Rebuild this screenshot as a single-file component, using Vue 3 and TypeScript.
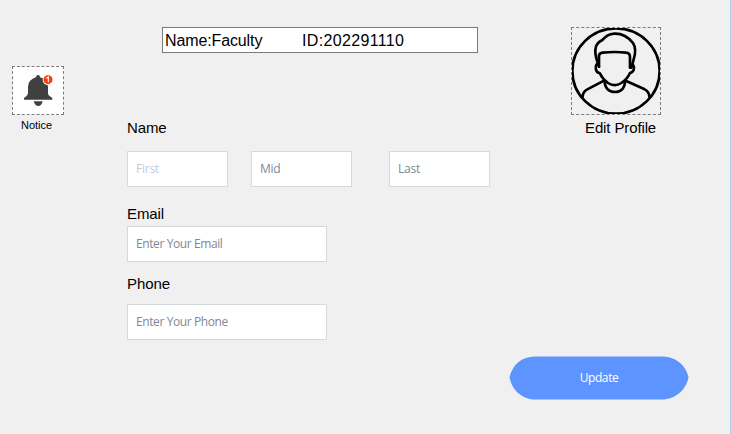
<script setup lang="ts">
import { reactive } from 'vue'

const user = { name: 'Faculty', id: '202291110' }
const form = reactive({ first: '', mid: '', last: '', email: '', phone: '' })
</script>

<template>
  <main class="window">
    <aside class="side">
      <button class="notice" type="button" aria-label="Notice">
        <svg width="50" height="47" viewBox="39 36 150 141">
          <path fill="#404040" d="M108 67Q108 60 114 60T120 67Q143 73 144 95V116Q145 121 157 129V134H72V129Q84 121 84 113V95Q85 74 108 67ZM101 139H128Q125 153 115 153T101 139Z" />
          <circle cx="144" cy="74" r="16" fill="#fff" />
          <circle cx="144" cy="74" r="13.5" fill="#fb3b04" />
          <path fill="none" stroke="#fff" stroke-width="3.5" d="M139 70L145 66V82" />
        </svg>
      </button>
      <span class="notice-text">Notice</span>
    </aside>

    <section class="details">
      <div class="identity">
        <span class="who">Name:{{ user.name }}</span>
        <span class="uid">ID:{{ user.id }}</span>
      </div>
      <label class="label name-label" for="first">Name</label>
      <div class="names">
        <input id="first" v-model="form.first" class="field short pale" placeholder="First" />
        <input v-model="form.mid" class="field short" placeholder="Mid" />
        <input v-model="form.last" class="field short last" placeholder="Last" />
      </div>
      <label class="label email-label" for="email">Email</label>
      <input id="email" v-model="form.email" class="field" placeholder="Enter Your Email" />
      <label class="label phone-label" for="phone">Phone</label>
      <input id="phone" v-model="form.phone" class="field phone" placeholder="Enter Your Phone" />
    </section>

    <section class="actions">
      <div class="avatar">
        <svg width="88" height="86" viewBox="36 39 264 258">
          <g fill="none" stroke="#000" stroke-width="8" stroke-linejoin="round" stroke-linecap="round">
            <ellipse cx="168" cy="168" rx="131" ry="128" />
            <path d="M117 155C112 140 105 124 106 105C106 90 113 82 127 75C137 65 145 57 163 56C190 55 207 69 219 84C229 99 226 119 220 137L214 158" />
            <path d="M117 155V122Q118 114 128 113Q164 109 198 113Q210 114 210 126V158" />
            <path d="M110 148C104 156 107 173 119 174C125 187 134 197 144 204Q164 217 184 204C196 196 205 186 210 174C222 172 225 158 219 149" />
            <path d="M134 198C134 218 146 231 165 231S195 218 195 198M132 197L82 223Q69 230 68 244M197 197L254 223Q267 230 268 244" />
          </g>
        </svg>
      </div>
      <span class="edit">Edit Profile</span>
      <button class="update" type="button">
        <svg class="pill" width="180" height="44" viewBox="0 0 180 44">
          <path fill="#5e94ff" d="M.5 21.5C3 9 13 .5 26 .5H153C166 .5 177 9 179.5 21.5C177 34 166 43.5 153 43.5H26C13 43.5 3 34 .5 21.5Z" />
        </svg>
        <span class="update-text">Update</span>
      </button>
    </section>
  </main>
</template>

<style>
body {
  margin: 0;
}
</style>

<style scoped>
.window {
  box-sizing: border-box;
  display: flex;
  width: 731px;
  height: 434px;
  padding-left: 12px;
  overflow: hidden;
  background: #f0f0f0;
  border-right: 1px solid #b1cdec;
  color: #000;
  font-family: "Liberation Sans", Arial, sans-serif;
}
svg {
  display: block;
}
.side {
  width: 115px;
  padding-top: 66px;
}
.notice {
  box-sizing: border-box;
  display: block;
  width: 52px;
  height: 49px;
  padding: 0;
  background: #fff;
  border: 1px dashed #7b7b7b;
}
.notice-text {
  display: block;
  margin: 4px 0 0 9px;
  font-size: 11px;
  line-height: 13px;
}
.details {
  display: flex;
  flex-direction: column;
  align-items: flex-start;
  width: 382px;
  padding-top: 27px;
}
.identity {
  box-sizing: border-box;
  display: flex;
  width: 316px;
  height: 26px;
  margin-left: 35px;
  padding-left: 2px;
  background: #fff;
  border: 1px solid #7a7a7a;
  font-size: 16px;
  line-height: 25px;
}
.who {
  width: 137px;
  letter-spacing: -0.12px;
}
.uid {
  letter-spacing: 0.35px;
}
.label {
  font-size: 15px;
  line-height: 18px;
  letter-spacing: -0.1px;
}
.name-label {
  margin: 66px 0 14px;
}
.names {
  display: flex;
  gap: 23px;
}
.field {
  box-sizing: border-box;
  width: 200px;
  height: 36px;
  padding: 0 8px 2px;
  background: #fff;
  border: 1px solid #d5dadf;
  border-radius: 0;
  outline: none;
  font-family: "Open Sans", "Noto Sans", sans-serif;
  font-size: 12px;
  letter-spacing: -0.4px;
}
.field::placeholder {
  color: #7d8994;
  opacity: 1;
}
.short {
  width: 101px;
  letter-spacing: -0.25px;
}
.pale::placeholder {
  color: #c1ccdb;
}
.last {
  margin-left: 14px;
}
.email-label {
  margin: 18px 0 3px;
}
.phone-label {
  margin-top: 13px;
}
.phone {
  margin-top: 11px;
}
.actions {
  width: 180px;
  padding-top: 27px;
}
.avatar {
  box-sizing: border-box;
  width: 90px;
  height: 88px;
  margin-left: 62px;
  border: 1px dashed #7b7b7b;
}
.edit {
  display: block;
  margin: 4px 0 0 76px;
  font-size: 15px;
  line-height: 18px;
  letter-spacing: -0.12px;
}
.update {
  display: grid;
  place-items: center;
  width: 180px;
  height: 44px;
  margin-top: 219px;
  padding: 0;
  background: none;
  border: 0;
  color: #fff;
  font: 12px "Open Sans", "Noto Sans", sans-serif;
  letter-spacing: -0.4px;
}
.update > * {
  grid-area: 1 / 1;
}
.update-text {
  padding-bottom: 2px;
}
</style>
